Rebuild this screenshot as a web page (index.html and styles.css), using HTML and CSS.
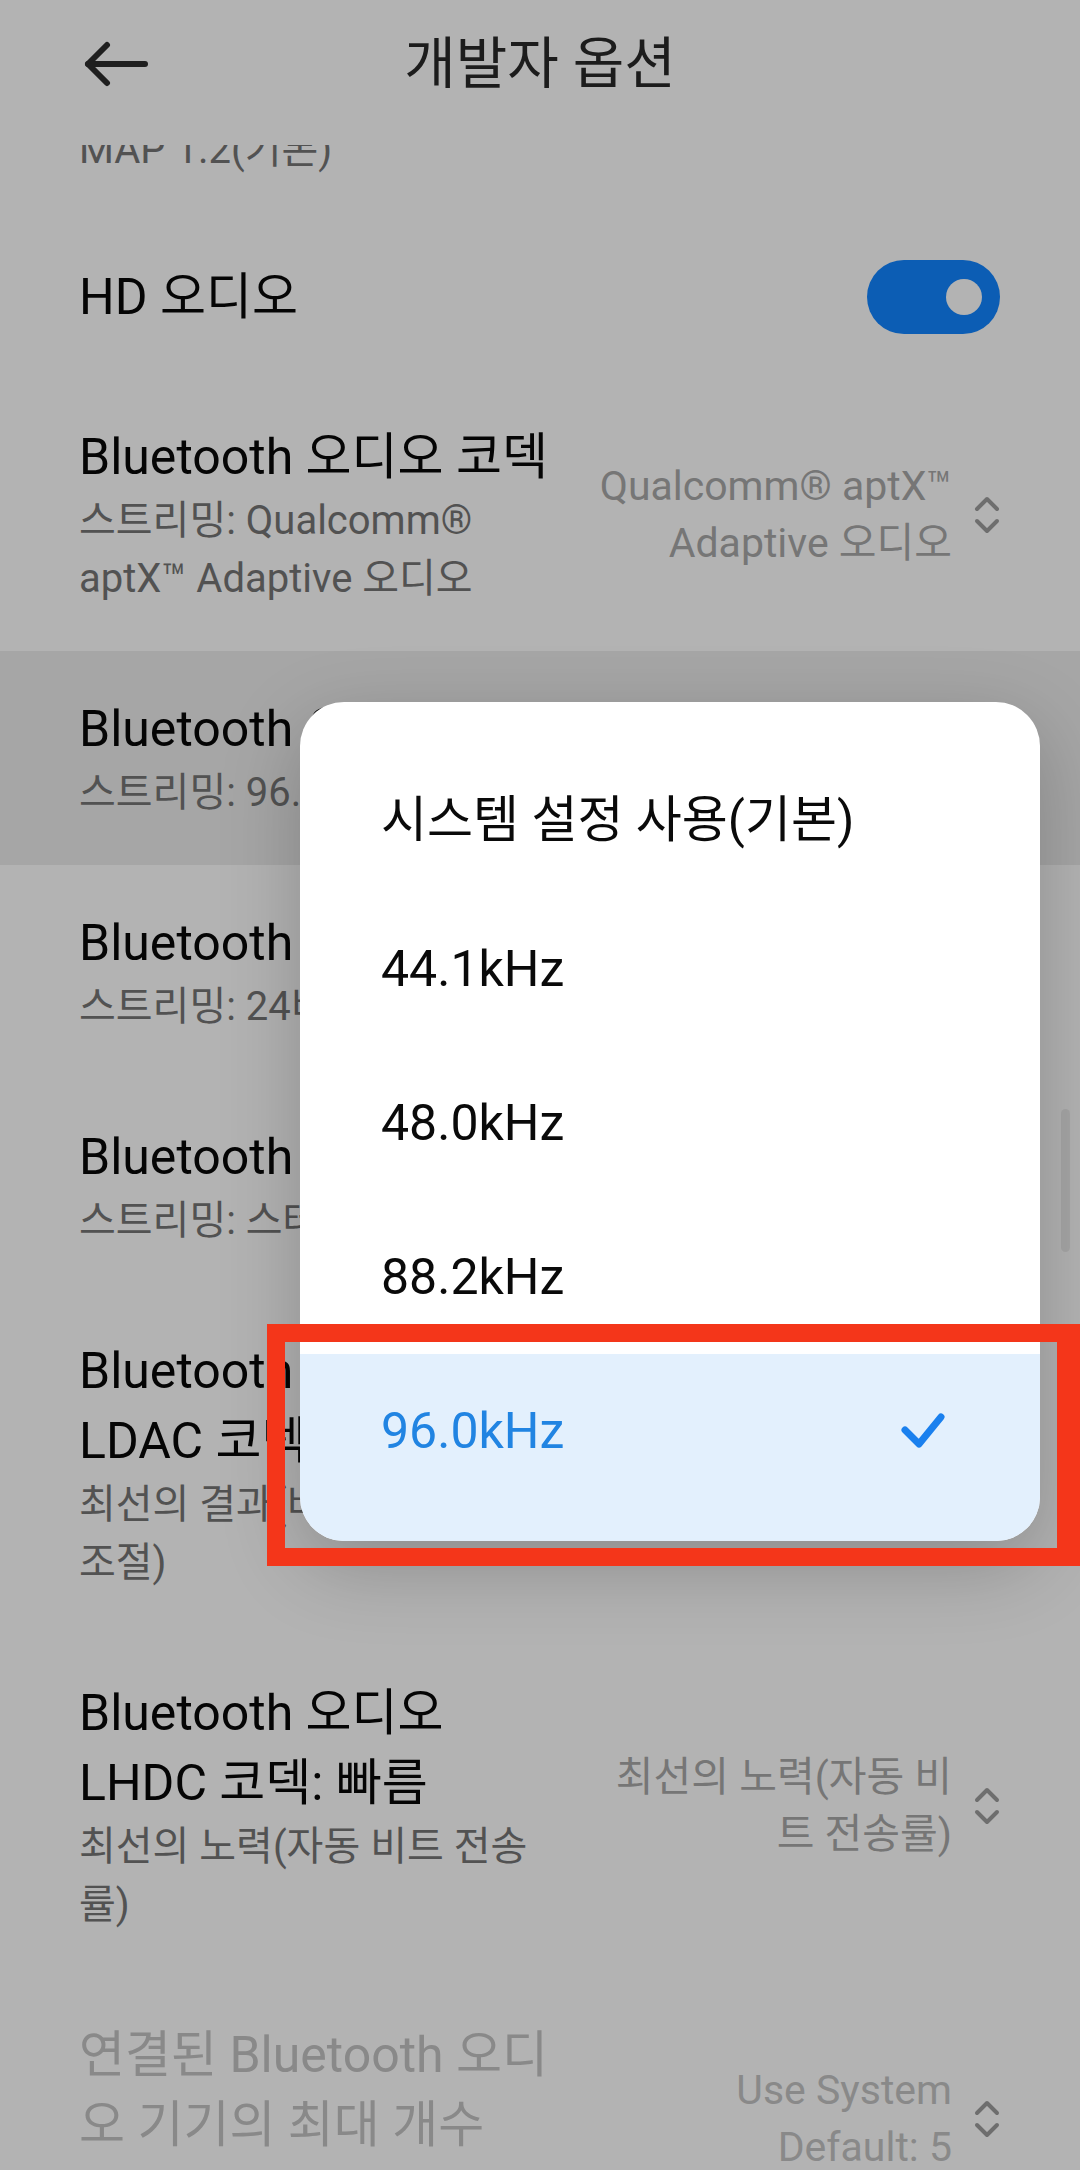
FILE: index.html
```html
<!DOCTYPE html>
<html lang="ko">
<head>
  <meta charset="UTF-8">
  <meta name="viewport" content="width=device-width, initial-scale=1.0">
  <title>개발자 옵션</title>
  <link rel="stylesheet" href="styles.css">
</head>
<body>
  <div class="screen">
    <header class="topbar">
      <div class="topbar__back">
        <svg class="icon-back" width="64" height="46" viewBox="0 0 64 46">
          <polyline points="23,4 4,23 23,42" />
          <line x1="4" y1="23" x2="61" y2="23" />
        </svg>
      </div>
      <h1 class="topbar__title">개발자 옵션</h1>
      <div></div>
    </header>

    <div class="list">
      <div class="row row--first">
        <div class="row__text">
          <div class="row__title row__title--nowrap">Bluetooth MAP 버전 선택</div>
          <div class="row__sub">MAP 1.2(기본)</div>
        </div>
      </div>

      <div class="row row--switch">
        <div class="row__text">
          <div class="row__title">HD 오디오</div>
        </div>
        <div class="switch"><span class="switch__knob"></span></div>
      </div>

      <div class="row">
        <div class="row__text">
          <div class="row__title">Bluetooth 오디오 코덱</div>
          <div class="row__sub">스트리밍: Qualcomm® aptX™ Adaptive 오디오</div>
        </div>
        <div class="row__value">
          <span class="row__value-text">Qualcomm® aptX™<br>Adaptive 오디오</span>
          <svg class="icon-updown" width="26" height="42" viewBox="0 0 26 42">
            <polyline points="3,15 13,5 23,15" />
            <polyline points="3,27 13,37 23,27" />
          </svg>
        </div>
      </div>

      <div class="row row--pressed">
        <div class="row__text">
          <div class="row__title row__title--nowrap">Bluetooth 오디오 샘플링 레이트</div>
          <div class="row__sub">스트리밍: 96.0kHz</div>
        </div>
        <div class="row__value">
          <span class="row__value-text">96.0kHz</span>
          <svg class="icon-updown" width="26" height="42" viewBox="0 0 26 42">
            <polyline points="3,15 13,5 23,15" />
            <polyline points="3,27 13,37 23,27" />
          </svg>
        </div>
      </div>

      <div class="row">
        <div class="row__text">
          <div class="row__title row__title--nowrap">Bluetooth 오디오 비트/샘플</div>
          <div class="row__sub">스트리밍: 24비트/샘플</div>
        </div>
        <div class="row__value">
          <span class="row__value-text">24비트/샘플</span>
          <svg class="icon-updown" width="26" height="42" viewBox="0 0 26 42">
            <polyline points="3,15 13,5 23,15" />
            <polyline points="3,27 13,37 23,27" />
          </svg>
        </div>
      </div>

      <div class="row">
        <div class="row__text">
          <div class="row__title row__title--nowrap">Bluetooth 오디오 채널 모드</div>
          <div class="row__sub">스트리밍: 스테레오</div>
        </div>
        <div class="row__value">
          <span class="row__value-text">스테레오</span>
          <svg class="icon-updown" width="26" height="42" viewBox="0 0 26 42">
            <polyline points="3,15 13,5 23,15" />
            <polyline points="3,27 13,37 23,27" />
          </svg>
        </div>
      </div>

      <div class="row">
        <div class="row__text">
          <div class="row__title">Bluetooth 오디오 LDAC 코덱: 재생 품질</div>
          <div class="row__sub row__sub--keep">최선의 결과(비트 전송률 조절)</div>
        </div>
        <div class="row__value">
          <span class="row__value-text">최선의 결과(비트<br>전송률 조절)</span>
          <svg class="icon-updown" width="26" height="42" viewBox="0 0 26 42">
            <polyline points="3,15 13,5 23,15" />
            <polyline points="3,27 13,37 23,27" />
          </svg>
        </div>
      </div>

      <div class="row">
        <div class="row__text">
          <div class="row__title">Bluetooth 오디오 LHDC 코덱: 빠름</div>
          <div class="row__sub">최선의 노력(자동 비트 전송률)</div>
        </div>
        <div class="row__value">
          <span class="row__value-text">최선의 노력(자동 비<br>트 전송률)</span>
          <svg class="icon-updown" width="26" height="42" viewBox="0 0 26 42">
            <polyline points="3,15 13,5 23,15" />
            <polyline points="3,27 13,37 23,27" />
          </svg>
        </div>
      </div>

      <div class="row row--disabled">
        <div class="row__text">
          <div class="row__title">연결된 Bluetooth 오디오 기기의 최대 개수</div>
          <div class="row__sub">Use System Default: 5</div>
        </div>
        <div class="row__value">
          <span class="row__value-text">Use System<br>Default: 5</span>
          <svg class="icon-updown" width="26" height="42" viewBox="0 0 26 42">
            <polyline points="3,15 13,5 23,15" />
            <polyline points="3,27 13,37 23,27" />
          </svg>
        </div>
      </div>
    </div>

    <div class="scrollbar"></div>

    <div class="dialog">
      <div class="option">시스템 설정 사용(기본)</div>
      <div class="option">44.1kHz</div>
      <div class="option">48.0kHz</div>
      <div class="option">88.2kHz</div>
      <div class="option option--selected">
        <span>96.0kHz</span>
        <svg class="icon-check" width="48" height="40" viewBox="0 0 48 40">
          <polyline points="6,19 20,33 42,6" />
        </svg>
      </div>
    </div>

    <div class="mark"></div>
  </div>
</body>
</html>
```

FILE: styles.css
```css
body {
  margin: 0;
  font-family: Roboto, "Noto Sans CJK KR", sans-serif;
}

.screen {
  position: relative;
  width: 1080px;
  height: 2170px;
  overflow: hidden;
  background-color: #b3b3b3;
}

/* top bar */
.topbar {
  position: relative;
  z-index: 1;
  display: grid;
  grid-template-columns: 1fr auto 1fr;
  align-items: center;
  height: 145px;
  padding-bottom: 17px;
  box-sizing: border-box;
  background-color: #b3b3b3;
}

.topbar__back {
  padding-left: 84px;
  display: flex;
}

.icon-back {
  fill: none;
  stroke: #1f1f1f;
  stroke-width: 6;
  stroke-linecap: round;
  stroke-linejoin: round;
}

.topbar__title {
  margin: 0;
  font-size: 56px;
  font-weight: 400;
  line-height: 1;
  color: #1c1c1c;
}

/* settings list */
.list {
  margin-top: -137px;
}

.row {
  display: flex;
  align-items: center;
  padding: 43px 80px 43px 79px;
}

.row--first {
  padding-bottom: 36px;
}

.row--switch {
  justify-content: space-between;
  padding-top: 45px;
  padding-bottom: 45px;
}

.row--pressed {
  background-color: #a6a6a6;
}

.row__text {
  flex: 0 0 474px;
  min-width: 0;
}

.row__title {
  font-size: 50px;
  line-height: 70px;
  color: #050505;
}

.row__title--nowrap {
  white-space: nowrap;
}

.row__sub {
  font-size: 40px;
  line-height: 58px;
  color: #525252;
}

.row__sub--keep {
  word-break: keep-all;
}

.row__value {
  margin-left: auto;
  display: flex;
  align-items: center;
  gap: 22px;
}

.row__value-text {
  font-size: 41px;
  line-height: 57px;
  color: #767676;
  text-align: right;
}

.icon-updown {
  flex: none;
  fill: none;
  stroke: #6e6e6e;
  stroke-width: 4;
  stroke-linecap: round;
  stroke-linejoin: round;
}

.row--disabled .row__title,
.row--disabled .row__sub,
.row--disabled .row__value-text {
  color: #898989;
}

.switch {
  display: flex;
  align-items: center;
  justify-content: flex-end;
  width: 133px;
  height: 74px;
  padding-right: 18px;
  box-sizing: border-box;
  border-radius: 37px;
  background-color: #0c5db4;
}

.switch__knob {
  width: 36px;
  height: 36px;
  border-radius: 50%;
  background-color: #b3b3b3;
}

.scrollbar {
  position: absolute;
  left: 1061px;
  top: 1109px;
  width: 9px;
  height: 143px;
  border-radius: 5px;
  background-color: rgba(0, 0, 0, 0.07);
}

/* popup */
.dialog {
  position: absolute;
  left: 300px;
  top: 702px;
  width: 740px;
  padding-top: 36px;
  border-radius: 44px;
  overflow: hidden;
  background-color: #ffffff;
  box-shadow: 0 24px 80px rgba(0, 0, 0, 0.22);
}

.option {
  display: flex;
  align-items: center;
  justify-content: space-between;
  height: 154px;
  padding: 0 93px 0 81px;
  font-size: 50px;
  color: #0a0a0a;
}

.option--selected {
  height: 154px;
  padding-bottom: 33px;
  box-sizing: content-box;
  color: #2184e2;
  background-color: #e3f0fd;
}

.icon-check {
  fill: none;
  stroke: #1a80ee;
  stroke-width: 7;
  stroke-linecap: round;
  stroke-linejoin: round;
}

/* red annotation box */
.mark {
  position: absolute;
  left: 267px;
  top: 1324px;
  width: 813px;
  height: 242px;
  box-sizing: border-box;
  border: 18px solid #f4361a;
  border-right-width: 23px;
}
```
